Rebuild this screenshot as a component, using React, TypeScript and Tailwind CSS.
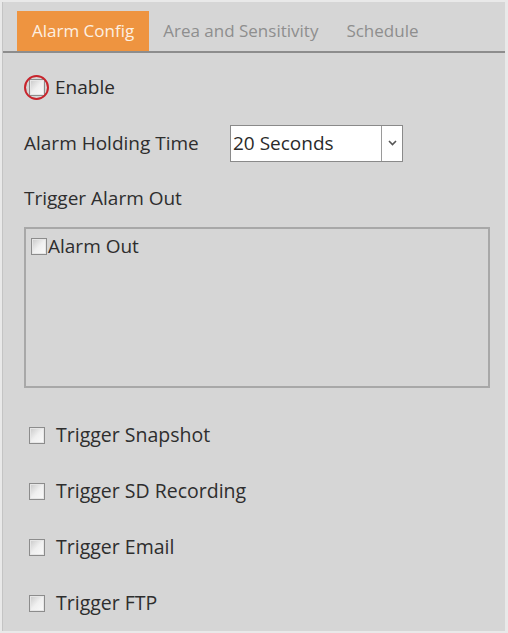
import React from 'react';

const font = { fontFamily: '"Open Sans", "Noto Sans", sans-serif' };

function Box({ className = '' }: { className?: string }) {
  return (
    <span
      className={`inline-block w-[16px] h-[17px] border border-[#8c8c8c] bg-gradient-to-br from-[#c8c8c8] via-[#f0f0f0] to-[#fafafa] shadow-[inset_0_0_0_1px_#e6e6e6] ${className}`}
    />
  );
}

function TriggerRow({ label }: { label: string }) {
  return (
    <div className="flex items-center h-[56px] pl-[26px]">
      <Box className="mr-[11px]" />
      <span className="text-[19.5px] text-[#2e2e2e]">{label}</span>
    </div>
  );
}

export default function App() {
  const tabs = ['Alarm Config', 'Area and Sensitivity', 'Schedule'];
  return (
    <div className="w-[508px] h-[633px] bg-[#e9e9e9] p-[2px] pr-[3px]" style={font}>
      <div className="h-full bg-[#d6d6d6] border-l border-[#c4c4c4]">
        <div className="flex items-end h-[51px] pt-[9px] pl-[14px] border-b-2 border-[#8d8d8d]">
          {tabs.map((t, i) => (
            <div
              key={t}
              className={
                i === 0
                  ? 'h-full px-[15px] flex items-center bg-[#ee9440] text-[#fdf0e2] text-[17px]'
                  : 'h-full px-[14px] flex items-center text-[#8e8e8e] text-[17px]'
              }
            >
              {t}
            </div>
          ))}
        </div>

        <div className="flex items-center h-[68px] pl-[26px]">
          <span className="relative inline-flex items-center justify-center w-[16px] h-[17px] mr-[10px]">
            <Box />
            <span className="absolute w-[25px] h-[25px] rounded-full border-2 border-[#c8242c] -left-[5px] -top-[4px]" />
          </span>
          <span className="text-[19px] text-[#2a2a2a]">Enable</span>
        </div>

        <div className="flex items-center h-[44px] pl-[21px]">
          <span className="w-[206px] text-[19px] text-[#2e2e2e]">Alarm Holding Time</span>
          <div className="flex h-[37px] w-[173px] bg-white border border-[#8a8a8a]">
            <span className="flex-1 flex items-center pl-[2px] text-[19px] text-[#2a2a2a]">20 Seconds</span>
            <span className="w-[21px] border-l border-[#9a9a9a] flex items-center justify-center">
              <svg width="9" height="6" viewBox="0 0 9 6">
                <path d="M1 1l3.5 3.5L8 1" fill="none" stroke="#555" strokeWidth="1.6" />
              </svg>
            </span>
          </div>
        </div>

        <div className="flex items-center h-[56px] pl-[21px] pt-[10px]">
          <span className="text-[19px] text-[#2e2e2e]">Trigger Alarm Out</span>
        </div>

        <div className="ml-[21px] mt-[6px] w-[466px] h-[161px] border-2 border-[#a8a8a8] pt-[6px] pl-[5px]">
          <div className="flex items-center">
            <Box className="mr-[1px]" />
            <span className="text-[19px] text-[#2e2e2e] leading-[22px]">Alarm Out</span>
          </div>
        </div>

        <div className="pt-[19px]">
          <TriggerRow label="Trigger Snapshot" />
          <TriggerRow label="Trigger SD Recording" />
          <TriggerRow label="Trigger Email" />
          <TriggerRow label="Trigger FTP" />
        </div>
      </div>
    </div>
  );
}
